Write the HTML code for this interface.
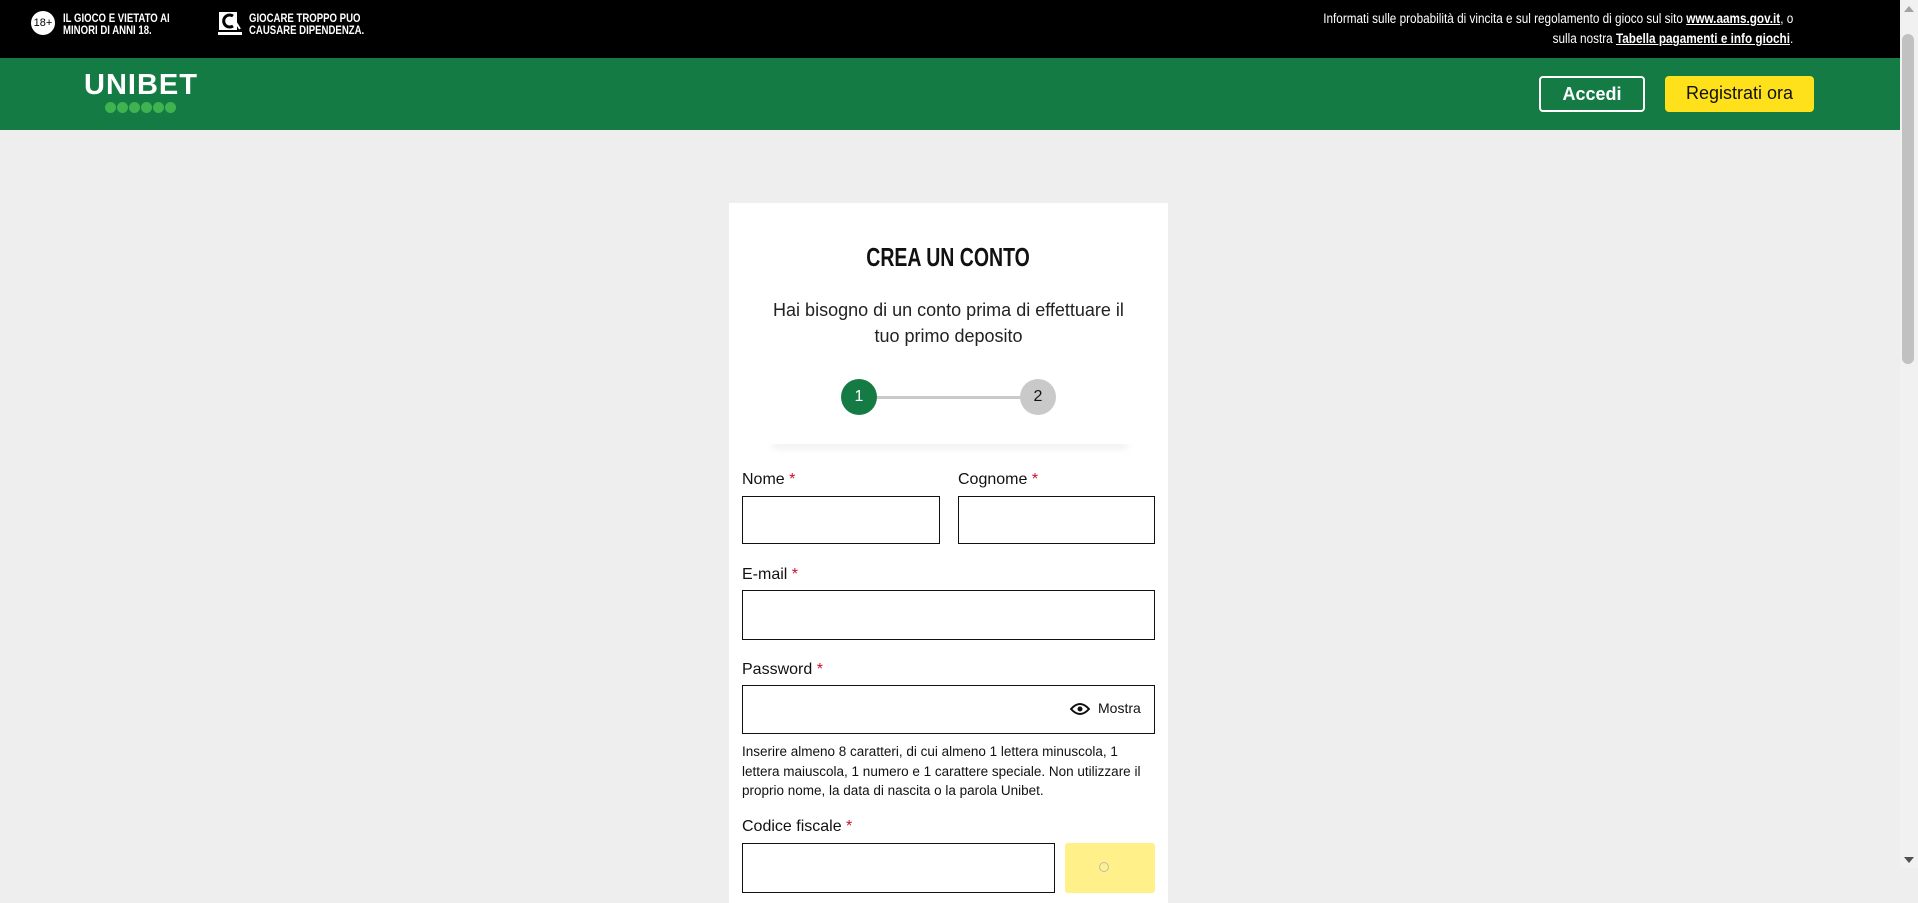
<!DOCTYPE html>
<html><head><meta charset="utf-8"><style>
*{margin:0;padding:0;box-sizing:border-box}
body{width:1918px;height:868px;overflow:hidden;background:#eeeeee;font-family:"Liberation Sans",sans-serif;position:relative;color:#111}
.a{position:absolute}
.top{left:0;top:0;width:1900px;height:58px;background:#000}
.nav{left:0;top:58px;width:1900px;height:72px;background:#147b45}
.warn{color:#fff;font-weight:bold;font-size:12px;line-height:12px;transform:scaleX(.8);transform-origin:left top;white-space:nowrap}
.info{right:125px;top:9px;color:#fff;font-size:13.5px;line-height:20px;text-align:right;transform:scaleX(.87);transform-origin:right top;white-space:nowrap}
.info u{font-weight:bold}
.btn{border-radius:4px;font-size:18px;text-align:center;line-height:34px}
.card{left:729px;top:203px;width:439px;height:700px;background:#fff}
.lbl{font-size:16px;color:#111}
.lbl b{color:#c8102e;font-weight:normal}
.inp{border:1.5px solid #111;background:#fff}
.sb{left:1900px;top:0;width:18px;height:868px;background:#f1f1f1}
</style></head><body>
<div class="a top"></div>
<div class="a" style="left:31px;top:11px;width:24px;height:24px;border-radius:50%;background:#fff;color:#000;font-size:11px;line-height:24px;text-align:center">18+</div>
<div class="a warn" style="left:63px;top:12px">IL GIOCO E VIETATO AI<br>MINORI DI ANNI 18.</div>
<svg class="a" style="left:218px;top:11px" width="26" height="26" viewBox="0 0 26 26"><rect x="1" y="1" width="18" height="18" fill="#fff"/><path d="M15 5 A6 6 0 1 0 15 15" stroke="#000" stroke-width="3" fill="none"/><path d="M10 10 H17 L22 18" stroke="#fff" stroke-width="2" fill="none"/><rect x="0" y="21" width="24" height="3" fill="#fff"/></svg>
<div class="a warn" style="left:249px;top:12px">GIOCARE TROPPO PUO<br>CAUSARE DIPENDENZA.</div>
<div class="a info">Informati sulle probabilità di vincita e sul regolamento di gioco sul sito <u>www.aams.gov.it</u>, o<br>sulla nostra <u>Tabella pagamenti e info giochi</u>.</div>
<div class="a nav"></div>
<div class="a" style="left:84px;top:70px;color:#fff;font-weight:bold;font-size:29px;letter-spacing:1px;line-height:30px">UNIBET</div>
<div class="a" style="left:105px;top:102px;display:flex;gap:1px">
<span style="width:11px;height:11px;border-radius:50%;background:#3fb34f"></span><span style="width:11px;height:11px;border-radius:50%;background:#3fb34f"></span><span style="width:11px;height:11px;border-radius:50%;background:#3fb34f"></span><span style="width:11px;height:11px;border-radius:50%;background:#3fb34f"></span><span style="width:11px;height:11px;border-radius:50%;background:#3fb34f"></span><span style="width:11px;height:11px;border-radius:50%;background:#3fb34f"></span></div>
<div class="a btn" style="left:1539px;top:76px;width:106px;height:36px;border:2px solid #fff;color:#fff;font-weight:bold;line-height:32px">Accedi</div>
<div class="a btn" style="left:1665px;top:76px;width:149px;height:36px;background:#ffe11b;color:#111">Registrati ora</div>
<div class="a card"></div>
<div class="a" style="left:729px;top:242px;width:439px;text-align:center;font-size:26px;font-weight:bold;color:#111"><span style="display:inline-block;transform:scaleX(.75)">CREA UN CONTO</span></div>
<div class="a" style="left:749px;top:297px;width:399px;text-align:center;font-size:18px;line-height:26px;color:#222">Hai bisogno di un conto prima di effettuare il<br>tuo primo deposito</div>
<div class="a" style="left:877px;top:396px;width:144px;height:3px;background:#c9c9c9"></div>
<div class="a" style="left:841px;top:379px;width:36px;height:36px;border-radius:50%;background:#147b45;color:#fff;text-align:center;line-height:36px;font-size:16px">1</div>
<div class="a" style="left:1020px;top:379px;width:36px;height:36px;border-radius:50%;background:#c9c9c9;color:#111;text-align:center;line-height:36px;font-size:16px">2</div>
<div class="a" style="left:770px;top:434px;width:360px;height:10px;box-shadow:0 6px 8px -3px rgba(0,0,0,.12)"></div>
<div class="a lbl" style="left:742px;top:471px">Nome <b>*</b></div>
<div class="a lbl" style="left:958px;top:471px">Cognome <b>*</b></div>
<div class="a inp" style="left:742px;top:496px;width:198px;height:48px"></div>
<div class="a inp" style="left:958px;top:496px;width:197px;height:48px"></div>
<div class="a lbl" style="left:742px;top:566px">E-mail <b>*</b></div>
<div class="a inp" style="left:742px;top:590px;width:413px;height:50px"></div>
<div class="a lbl" style="left:742px;top:661px">Password <b>*</b></div>
<div class="a inp" style="left:742px;top:685px;width:413px;height:49px"></div>
<svg class="a" style="left:1070px;top:701px" width="20" height="16" viewBox="0 0 20 16"><path d="M1 8 Q10 -2 19 8 Q10 18 1 8Z" fill="none" stroke="#111" stroke-width="2"/><circle cx="10" cy="8" r="2.5" fill="#111"/></svg>
<div class="a" style="left:1098px;top:700px;font-size:14px;color:#111">Mostra</div>
<div class="a" style="left:742px;top:742px;width:410px;font-size:13.5px;line-height:19.5px;color:#111">Inserire almeno 8 caratteri, di cui almeno 1 lettera minuscola, 1 lettera maiuscola, 1 numero e 1 carattere speciale. Non utilizzare il proprio nome, la data di nascita o la parola Unibet.</div>
<div class="a lbl" style="left:742px;top:818px">Codice fiscale <b>*</b></div>
<div class="a inp" style="left:742px;top:843px;width:313px;height:50px"></div>
<div class="a" style="left:1065px;top:843px;width:90px;height:50px;background:#fff08a;border-radius:3px"></div>
<div class="a" style="left:1099px;top:862px;width:10px;height:10px;border:1.5px solid #bbb;border-radius:50%"></div>
<div class="a sb"></div>
<div class="a" style="left:1904px;top:6px;width:0;height:0;border-left:5px solid transparent;border-right:5px solid transparent;border-bottom:6px solid #a3a3a3"></div>
<div class="a" style="left:1902px;top:34px;width:12px;height:330px;background:#c1c1c1;border-radius:6px"></div>
<div class="a" style="left:1904px;top:857px;width:0;height:0;border-left:5px solid transparent;border-right:5px solid transparent;border-top:6px solid #505050"></div>
</body></html>
